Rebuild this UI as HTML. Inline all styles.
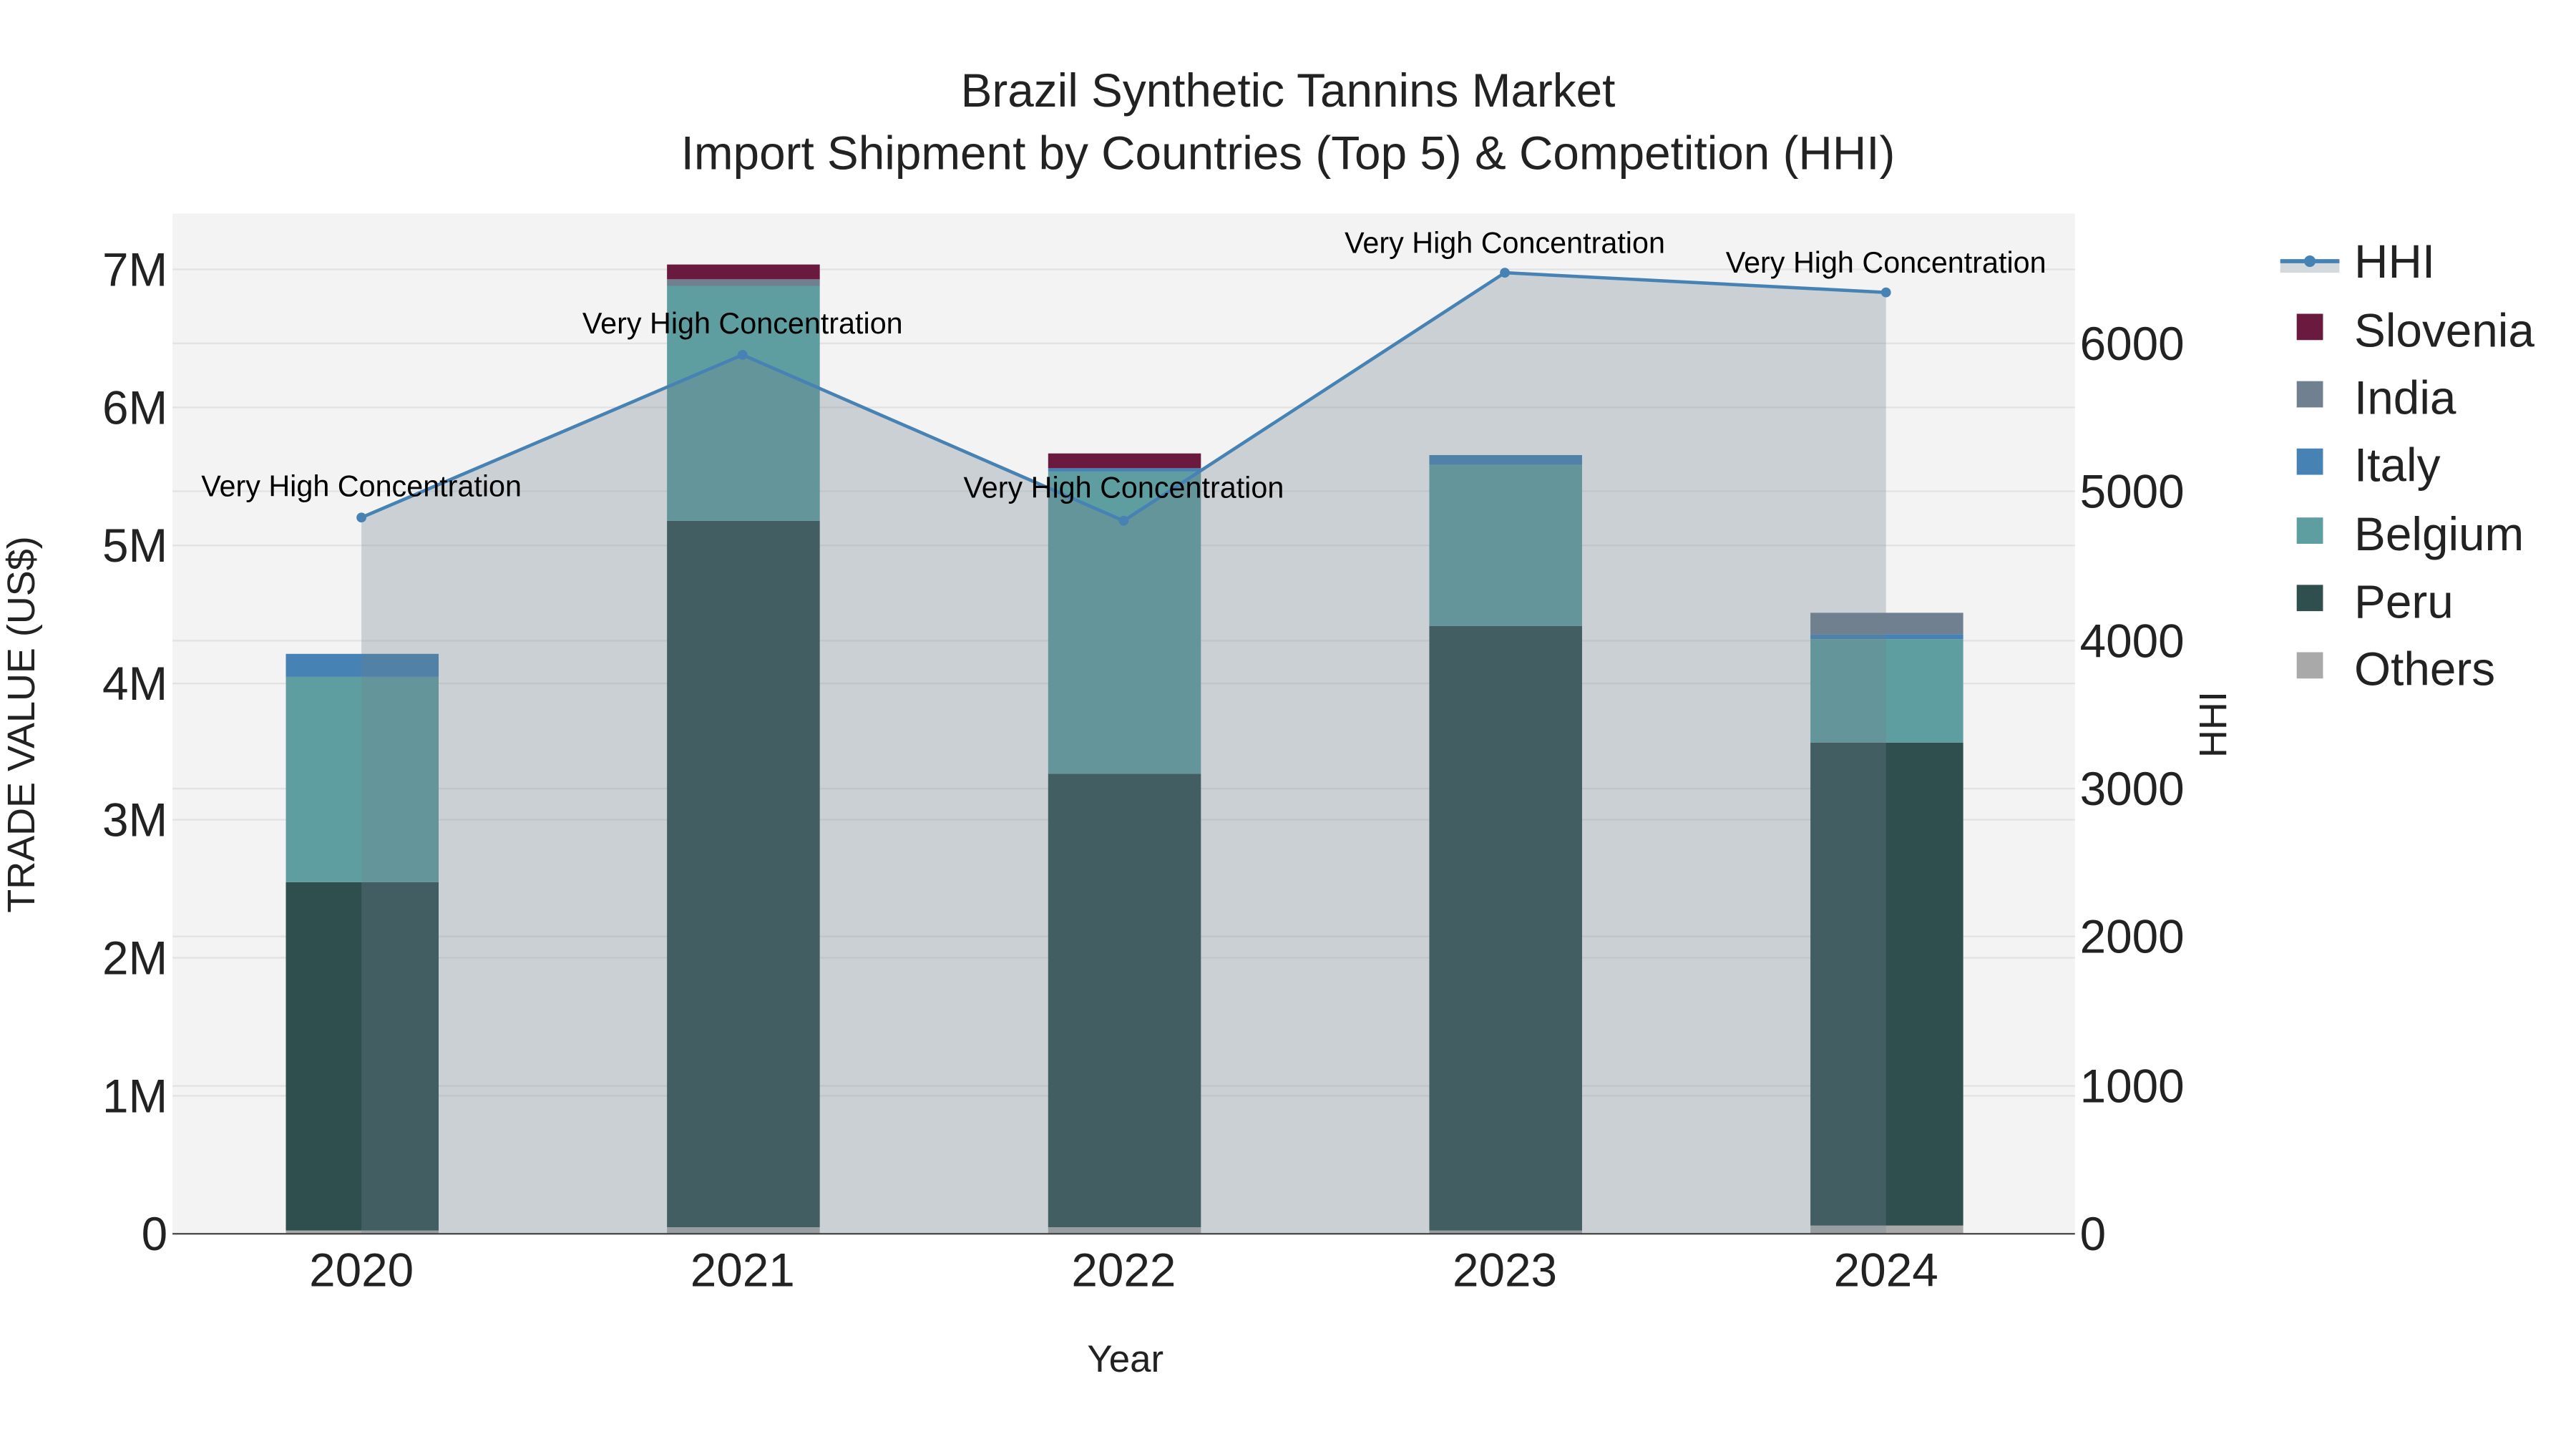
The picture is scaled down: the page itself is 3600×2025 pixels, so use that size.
<!DOCTYPE html>
<html><head><meta charset="utf-8"><style>
html,body{margin:0;padding:0;background:#fff;}
svg{display:block;}
text{font-family:"Liberation Sans",sans-serif;}
</style></head><body>
<svg width="3600" height="2025" viewBox="0 0 1568 882" preserveAspectRatio="none" xmlns="http://www.w3.org/2000/svg">
<rect width="1568" height="882" fill="#fff"/>
<rect x="105" y="130" width="1158" height="621" fill="#f3f3f3"/>
<g stroke="#e2e2e2" stroke-width="1">
<line x1="105" x2="1263" y1="667" y2="667"/><line x1="105" x2="1263" y1="583" y2="583"/>
<line x1="105" x2="1263" y1="499" y2="499"/><line x1="105" x2="1263" y1="416" y2="416"/>
<line x1="105" x2="1263" y1="332" y2="332"/><line x1="105" x2="1263" y1="248" y2="248"/>
<line x1="105" x2="1263" y1="164" y2="164"/>
<line x1="105" x2="1263" y1="661" y2="661"/><line x1="105" x2="1263" y1="570" y2="570"/>
<line x1="105" x2="1263" y1="480" y2="480"/><line x1="105" x2="1263" y1="390" y2="390"/>
<line x1="105" x2="1263" y1="299" y2="299"/><line x1="105" x2="1263" y1="209" y2="209"/>
</g>
<g>
<rect x="174" y="749" width="93" height="2" fill="#a9a9a9"/>
<rect x="174" y="537" width="93" height="212" fill="#2f4f4f"/>
<rect x="174" y="412" width="93" height="125" fill="#5f9ea0"/>
<rect x="174" y="398" width="93" height="14" fill="#4682b4"/>

<rect x="406" y="747" width="93" height="4" fill="#a9a9a9"/>
<rect x="406" y="317" width="93" height="430" fill="#2f4f4f"/>
<rect x="406" y="174" width="93" height="143" fill="#5f9ea0"/>
<rect x="406" y="170" width="93" height="4" fill="#708090"/>
<rect x="406" y="161" width="93" height="9" fill="#6b1a3f"/>

<rect x="638" y="747" width="93" height="4" fill="#a9a9a9"/>
<rect x="638" y="471" width="93" height="276" fill="#2f4f4f"/>
<rect x="638" y="287" width="93" height="184" fill="#5f9ea0"/>
<rect x="638" y="285" width="93" height="2" fill="#4682b4"/>
<rect x="638" y="276" width="93" height="9" fill="#6b1a3f"/>

<rect x="870" y="749" width="93" height="2" fill="#a9a9a9"/>
<rect x="870" y="381" width="93" height="368" fill="#2f4f4f"/>
<rect x="870" y="283" width="93" height="98" fill="#5f9ea0"/>
<rect x="870" y="277" width="93" height="6" fill="#4682b4"/>

<rect x="1102" y="746" width="93" height="5" fill="#a9a9a9"/>
<rect x="1102" y="452" width="93" height="294" fill="#2f4f4f"/>
<rect x="1102" y="389" width="93" height="63" fill="#5f9ea0"/>
<rect x="1102" y="386" width="93" height="3" fill="#4682b4"/>
<rect x="1102" y="373" width="93" height="13" fill="#708090"/>
</g>
<path d="M220,315 L452,216 L684,317 L916,166 L1148,178 L1148,751 L220,751 Z" fill="rgba(112,128,144,0.3)"/>
<polyline points="220,315 452,216 684,317 916,166 1148,178" fill="none" stroke="#4682b4" stroke-width="2"/>
<g fill="#4682b4"><circle cx="220" cy="315" r="3"/><circle cx="452" cy="216" r="3"/><circle cx="684" cy="317" r="3"/><circle cx="916" cy="166" r="3"/><circle cx="1148" cy="178" r="3"/></g>
<line x1="105" x2="1263" y1="751" y2="751" stroke="#444" stroke-width="1"/>
<g font-size="18" fill="#000" text-anchor="middle">
<text x="220" y="302">Very High Concentration</text>
<text x="452" y="203">Very High Concentration</text>
<text x="684" y="303">Very High Concentration</text>
<text x="916" y="154">Very High Concentration</text>
<text x="1148" y="166">Very High Concentration</text>
</g>
<g font-size="28.6" fill="#222" text-anchor="end">
<text x="102" y="761">0</text><text x="102" y="677">1M</text><text x="102" y="593">2M</text>
<text x="102" y="509">3M</text><text x="102" y="426">4M</text><text x="102" y="342">5M</text>
<text x="102" y="258">6M</text><text x="102" y="174">7M</text>
</g>
<g font-size="28.6" fill="#222" text-anchor="start">
<text x="1266" y="761">0</text><text x="1266" y="671">1000</text><text x="1266" y="580">2000</text>
<text x="1266" y="490">3000</text><text x="1266" y="400">4000</text><text x="1266" y="309">5000</text>
<text x="1266" y="219">6000</text>
</g>
<g font-size="28.6" fill="#222" text-anchor="middle">
<text x="220" y="783">2020</text><text x="452" y="783">2021</text><text x="684" y="783">2022</text>
<text x="916" y="783">2023</text><text x="1148" y="783">2024</text>
</g>
<text x="685" y="835" font-size="23" fill="#222" text-anchor="middle">Year</text>
<text transform="translate(21,441) rotate(-90)" font-size="23.5" fill="#222" text-anchor="middle">TRADE VALUE (US$)</text>
<text transform="translate(1355,441) rotate(-90)" font-size="23.5" fill="#222" text-anchor="middle">HHI</text>
<g font-size="28.6" fill="#222" text-anchor="middle">
<text x="784" y="65">Brazil Synthetic Tannins Market</text>
<text x="784" y="103">Import Shipment by Countries (Top 5) &amp; Competition (HHI)</text>
</g>
<rect x="1388" y="158" width="36" height="8" fill="rgba(112,128,144,0.3)"/>
<line x1="1388" x2="1424" y1="159" y2="159" stroke="#4682b4" stroke-width="2.5"/>
<circle cx="1406" cy="159" r="3.5" fill="#4682b4"/>
<rect x="1398" y="191" width="16" height="16" fill="#6b1a3f"/>
<rect x="1398" y="232" width="16" height="16" fill="#708090"/>
<rect x="1398" y="273" width="16" height="16" fill="#4682b4"/>
<rect x="1398" y="315" width="16" height="16" fill="#5f9ea0"/>
<rect x="1398" y="356" width="16" height="16" fill="#2f4f4f"/>
<rect x="1398" y="397" width="16" height="16" fill="#a9a9a9"/>
<g font-size="28.6" fill="#222">
<text x="1433" y="169">HHI</text><text x="1433" y="211">Slovenia</text><text x="1433" y="252">India</text>
<text x="1433" y="293">Italy</text><text x="1433" y="335">Belgium</text><text x="1433" y="376">Peru</text>
<text x="1433" y="417">Others</text>
</g>
</svg>
</body></html>
